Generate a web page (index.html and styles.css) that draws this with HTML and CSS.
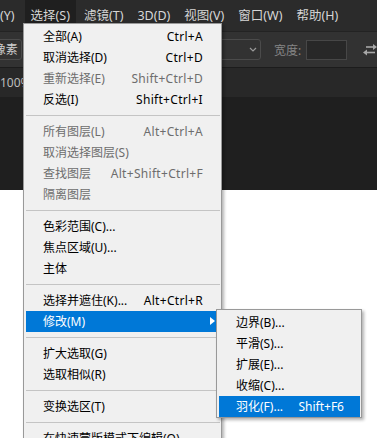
FILE: index.html
```html
<!DOCTYPE html>
<html lang="zh-CN">
<head>
    <meta charset="UTF-8">
    <meta name="viewport" content="width=device-width, initial-scale=1.0">
    <title>选择菜单</title>
    <link rel="stylesheet" href="styles.css">
</head>
<body>
    <div class="app">
        <div class="menubar">
            <span class="mb-item first">(Y)</span>
            <span class="mb-item open">选择(S)</span>
            <span class="mb-item">滤镜(T)</span>
            <span class="mb-item">3D(D)</span>
            <span class="mb-item">视图(V)</span>
            <span class="mb-item">窗口(W)</span>
            <span class="mb-item">帮助(H)</span>
        </div>

        <div class="options">
            <div class="select units">像素</div>
            <div class="select style">
                <svg width="8" height="5" viewBox="0 0 8 5"><path d="M1 1l3 3 3-3" fill="none" stroke="#9a9a9a" stroke-width="1.2"/></svg>
            </div>
            <span class="opt-label">宽度:</span>
            <div class="opt-input"></div>
            <svg class="swap" width="14" height="13" viewBox="0 0 14 13">
                <path d="M3 4h8" stroke="#a8a8a8" stroke-width="1.6"/>
                <path d="M10 1l4 3-4 3z" fill="#a8a8a8"/>
                <path d="M4 9.5h8" stroke="#a8a8a8" stroke-width="1.6"/>
                <path d="M4 6.5l-4 3 4 3z" fill="#a8a8a8"/>
            </svg>
        </div>

        <div class="tabs"><span class="tab">100%</span></div>
        <div class="workspace"></div>
        <div class="canvas"></div>

        <div class="menu main-menu">
            <div class="item"><span>全部(A)</span><span class="key">Ctrl+A</span></div>
            <div class="item"><span>取消选择(D)</span><span class="key">Ctrl+D</span></div>
            <div class="item disabled"><span>重新选择(E)</span><span class="key">Shift+Ctrl+D</span></div>
            <div class="item"><span>反选(I)</span><span class="key">Shift+Ctrl+I</span></div>
            <div class="sep"></div>
            <div class="item disabled"><span>所有图层(L)</span><span class="key">Alt+Ctrl+A</span></div>
            <div class="item disabled"><span>取消选择图层(S)</span></div>
            <div class="item disabled"><span>查找图层</span><span class="key">Alt+Shift+Ctrl+F</span></div>
            <div class="item disabled"><span>隔离图层</span></div>
            <div class="sep"></div>
            <div class="item"><span>色彩范围(C)...</span></div>
            <div class="item"><span>焦点区域(U)...</span></div>
            <div class="item"><span>主体</span></div>
            <div class="sep"></div>
            <div class="item"><span>选择并遮住(K)...</span><span class="key">Alt+Ctrl+R</span></div>
            <div class="item active sub"><span>修改(M)</span></div>
            <div class="sep"></div>
            <div class="item"><span>扩大选取(G)</span></div>
            <div class="item"><span>选取相似(R)</span></div>
            <div class="sep"></div>
            <div class="item"><span>变换选区(T)</span></div>
            <div class="sep"></div>
            <div class="item"><span>在快速蒙版模式下编辑(Q)</span></div>
        </div>

        <div class="menu submenu">
            <div class="item"><span>边界(B)...</span></div>
            <div class="item"><span>平滑(S)...</span></div>
            <div class="item"><span>扩展(E)...</span></div>
            <div class="item"><span>收缩(C)...</span></div>
            <div class="item active"><span>羽化(F)...</span><span>Shift+F6</span></div>
        </div>
    </div>
</body>
</html>
```

FILE: styles.css
```css
html, body {
    margin: 0;
    padding: 0;
}
body {
    font-family: "Noto Sans", "Noto Sans CJK SC", sans-serif;
    font-size: 12px;
    background: #fff;
    overflow: hidden;
}
.app {
    position: relative;
    width: 377px;
    height: 438px;
    overflow: hidden;
    display: flex;
    flex-direction: column;
}

/* menu bar */
.menubar {
    height: 31px;
    background: #2b2b2b;
    display: flex;
    flex-shrink: 0;
}
.mb-item {
    padding: 0 6px;
    margin-right: 2px;
    line-height: 31px;
    font-size: 12.5px;
    color: #d6d6d6;
    white-space: nowrap;
}
.mb-item.first {
    padding: 0 8px 0 0;
}
.mb-item.open {
    background: #1f1f1f;
}

/* options bar */
.options {
    height: 35px;
    background: #323232;
    border-top: 1px solid #232323;
    border-bottom: 1px solid #1c1c1c;
    display: flex;
    align-items: center;
    flex-shrink: 0;
}
.select {
    height: 21px;
    box-sizing: border-box;
    border: 1px solid #4b4b4b;
    border-radius: 3px;
    display: flex;
    align-items: center;
    justify-content: flex-end;
    color: #cfcfcf;
}
.units {
    width: 32px;
    margin-left: -10px;
    padding-right: 3px;
    overflow: hidden;
    white-space: nowrap;
    line-height: 19px;
}
.style {
    width: 142px;
    margin-left: 98px;
    padding-right: 3px;
}
.opt-label {
    margin-left: 13px;
    color: #858585;
    white-space: nowrap;
}
.opt-input {
    width: 41px;
    height: 20px;
    box-sizing: border-box;
    margin-left: 5px;
    background: #282828;
    border: 1px solid #474747;
}
.swap {
    margin-left: 16px;
    flex-shrink: 0;
}

/* document tabs and workspace */
.tabs {
    height: 29px;
    background: #282828;
    flex-shrink: 0;
    display: flex;
    align-items: center;
}
.tab {
    color: #bcbcbc;
    font-size: 12px;
    white-space: nowrap;
}
.workspace {
    height: 93px;
    background: #1f1f1f;
    flex-shrink: 0;
}
.canvas {
    flex: 1;
    background: #fff;
}

/* dropdown menus */
.menu {
    position: absolute;
    box-sizing: border-box;
    background: #f0f0f0;
    border: 1px solid #999;
    box-shadow: 2px 2px 3px rgba(0, 0, 0, 0.3);
    color: #000;
}
.main-menu {
    left: 23px;
    top: 23px;
    width: 199px;
    padding: 2px 1px 2px 2px;
}
.submenu {
    left: 216px;
    top: 309px;
    width: 146px;
    padding: 2px 1px 0 2px;
}
.item {
    position: relative;
    height: 21px;
    line-height: 21px;
    display: flex;
    justify-content: space-between;
    white-space: nowrap;
}
.main-menu .item {
    padding: 0 13px 0 17px;
    margin-right: 4px;
}
.submenu .item {
    padding: 0 16px 0 17px;
}
.key {
    letter-spacing: 0.3px;
}
.item.disabled {
    color: #6d6d6d;
}
.item.active {
    background: #0078d7;
    color: #fff;
}
.item.sub::after {
    content: "";
    position: absolute;
    right: 1px;
    top: 6px;
    border-left: 5px solid #fff;
    border-top: 4px solid transparent;
    border-bottom: 4px solid transparent;
}
.sep {
    height: 1px;
    margin: 5px 0;
    background: #c4c4c4;
}
```
